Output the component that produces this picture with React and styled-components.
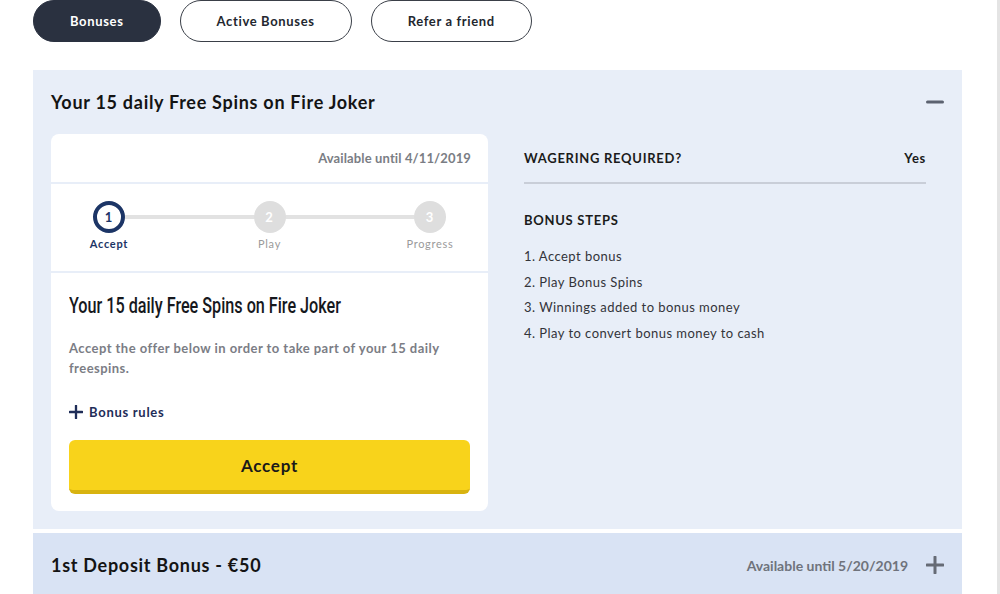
import styled, { createGlobalStyle } from 'styled-components'

const GlobalStyle = createGlobalStyle`
    html, body {
        margin: 0;
        padding: 0;
        background: #ffffff;
    }
    body {
        font-family: Lato, "Open Sans", Arial, sans-serif;
        letter-spacing: 0.045em;
        color: #1c1c1c;
    }
`

const Page = styled.div`
    box-sizing: border-box;
    width: 1000px;
    min-height: 594px;
    padding-left: 33px;
    border-right: 3px solid #e4e4e4;
`

const Tabs = styled.nav`
    display: flex;
    gap: 19px;
    margin-bottom: 28px;
`

const Tab = styled.button`
    height: 42px;
    padding: 0 36px;
    border-radius: 21px;
    border: 1px solid ${p => (p.$active ? '#2a3140' : '#3a3f48')};
    background: ${p => (p.$active ? '#2a3140' : '#ffffff')};
    color: ${p => (p.$active ? '#ffffff' : '#23272f')};
    font-family: Lato, sans-serif;
    font-weight: 700;
    font-size: 13px;
    letter-spacing: 0.05em;
    cursor: pointer;
`

const Panel = styled.section`
    width: 929px;
    background: ${p => (p.$closed ? '#d9e3f4' : '#e8eef8')};
    padding: 0 18px ${p => (p.$closed ? '0' : '18px')};
    box-sizing: border-box;
    margin-bottom: 4px;
`

const PanelHeader = styled.header`
    height: 64px;
    display: flex;
    align-items: center;
    gap: 18px;
`

const PanelTitle = styled.h2`
    flex: 1;
    margin: 0;
    font-size: 18px;
    font-weight: 700;
    color: #141414;
`

const HeaderDate = styled.span`
    font-size: 14px;
    font-weight: 700;
    letter-spacing: 0;
    color: #6f737c;
`

const Toggle = styled.svg`
    width: 18px;
    height: 18px;
    flex: none;
`

const PanelBody = styled.div`
    display: flex;
    gap: 36px;
`

const Card = styled.div`
    width: 437px;
    flex: none;
    background: #ffffff;
    border-radius: 8px;
    overflow: hidden;
`

const CardTop = styled.div`
    height: 48px;
    display: flex;
    align-items: center;
    justify-content: flex-end;
    padding: 0 17px;
    border-bottom: 2px solid #e8eef8;
    font-size: 13px;
    font-weight: 700;
    letter-spacing: 0.01em;
    color: #7a7d84;
`

const Stepper = styled.ol`
    position: relative;
    list-style: none;
    margin: 0;
    padding: 17px 28px 21px;
    display: flex;
    justify-content: space-between;
    border-bottom: 2px solid #e8eef8;

    &::before {
        content: '';
        position: absolute;
        left: 58px;
        right: 58px;
        top: 31px;
        height: 4px;
        background: #e2e2e2;
    }
`

const Step = styled.li`
    position: relative;
    width: 60px;
    display: flex;
    flex-direction: column;
    align-items: center;
    gap: 4px;
`

const StepDot = styled.span`
    box-sizing: border-box;
    width: 32px;
    height: 32px;
    border-radius: 50%;
    display: flex;
    align-items: center;
    justify-content: center;
    font-size: 13px;
    font-weight: 700;
    background: ${p => (p.$current ? '#ffffff' : '#dedede')};
    border: ${p => (p.$current ? '4px solid #1c3566' : 'none')};
    color: ${p => (p.$current ? '#1c3566' : '#ffffff')};
`

const StepLabel = styled.span`
    font-size: 11px;
    font-weight: ${p => (p.$current ? 700 : 400)};
    color: ${p => (p.$current ? '#1c3566' : '#9a9a9a')};
`

const CardContent = styled.div`
    padding: 20px 18px 17px;
`

const OfferTitle = styled.h3`
    margin: 0 0 19px;
    height: 26px;
    line-height: 26px;
    font-family: Roboto, sans-serif;
    font-weight: 500;
    font-size: 22px;
    letter-spacing: 0;
    color: #16181d;
    white-space: nowrap;
    transform: scaleX(0.735);
    transform-origin: left center;
`

const Description = styled.p`
    margin: 0 0 25px;
    font-size: 13px;
    line-height: 20px;
    font-weight: 700;
    letter-spacing: 0.035em;
    color: #7b7d85;
`

const RulesLink = styled.a`
    display: flex;
    align-items: center;
    gap: 6px;
    height: 18px;
    margin-bottom: 19px;
    font-size: 13px;
    font-weight: 700;
    color: #1f2d58;
    cursor: pointer;
`

const AcceptButton = styled.button`
    width: 100%;
    height: 54px;
    border: none;
    border-bottom: 4px solid #d8b310;
    border-radius: 6px;
    background: #f8d31b;
    font-family: Lato, sans-serif;
    font-size: 17px;
    font-weight: 700;
    letter-spacing: 0.045em;
    color: #1a1a1a;
    cursor: pointer;
`

const Details = styled.div`
    flex: 1;
    padding-right: 18px;
`

const InfoRow = styled.div`
    height: 48px;
    display: flex;
    align-items: center;
    justify-content: space-between;
    border-bottom: 2px solid #c9ced8;
    font-size: 13px;
    font-weight: 700;
    color: #1b1b1b;
`

const SectionTitle = styled.h4`
    margin: 28px 0 16px;
    font-size: 13px;
    font-weight: 700;
    color: #1b1b1b;
`

const StepsList = styled.ol`
    margin: 0;
    padding: 0;
    list-style: none;
    font-size: 13px;
    line-height: 25.7px;
    letter-spacing: 0.035em;
    color: #33343a;
`

function PlusIcon({ color = '#666b75', size = 18, stroke = 3 }) {
    return (
        <Toggle viewBox="0 0 18 18" style={{ width: size, height: size }}>
            <path d="M1 9h16M9 1v16" stroke={color} strokeWidth={stroke} strokeLinecap="round" />
        </Toggle>
    )
}

function MinusIcon() {
    return (
        <Toggle viewBox="0 0 18 18">
            <path d="M1.5 9h15" stroke="#5c6270" strokeWidth="3" strokeLinecap="round" />
        </Toggle>
    )
}

const steps = ['Accept', 'Play', 'Progress']
const bonusSteps = [
    '1. Accept bonus',
    '2. Play Bonus Spins',
    '3. Winnings added to bonus money',
    '4. Play to convert bonus money to cash',
]

export default function App() {
    return (
        <Page>
            <GlobalStyle />
            <Tabs>
                <Tab $active>Bonuses</Tab>
                <Tab>Active Bonuses</Tab>
                <Tab>Refer a friend</Tab>
            </Tabs>

            <Panel>
                <PanelHeader>
                    <PanelTitle>Your 15 daily Free Spins on Fire Joker</PanelTitle>
                    <MinusIcon />
                </PanelHeader>
                <PanelBody>
                    <Card>
                        <CardTop>Available until 4/11/2019</CardTop>
                        <Stepper>
                            {steps.map((s, i) => (
                                <Step key={s}>
                                    <StepDot $current={i === 0}>{i + 1}</StepDot>
                                    <StepLabel $current={i === 0}>{s}</StepLabel>
                                </Step>
                            ))}
                        </Stepper>
                        <CardContent>
                            <OfferTitle>Your 15 daily Free Spins on Fire Joker</OfferTitle>
                            <Description>
                                Accept the offer below in order to take part of your 15 daily freespins.
                            </Description>
                            <RulesLink>
                                <PlusIcon color="#1f2d58" size={14} stroke={3} />
                                Bonus rules
                            </RulesLink>
                            <AcceptButton>Accept</AcceptButton>
                        </CardContent>
                    </Card>
                    <Details>
                        <InfoRow>
                            <span>WAGERING REQUIRED?</span>
                            <span>Yes</span>
                        </InfoRow>
                        <SectionTitle>BONUS STEPS</SectionTitle>
                        <StepsList>
                            {bonusSteps.map(s => (
                                <li key={s}>{s}</li>
                            ))}
                        </StepsList>
                    </Details>
                </PanelBody>
            </Panel>

            <Panel $closed>
                <PanelHeader>
                    <PanelTitle>1st Deposit Bonus - €50</PanelTitle>
                    <HeaderDate>Available until 5/20/2019</HeaderDate>
                    <PlusIcon />
                </PanelHeader>
            </Panel>
        </Page>
    )
}
